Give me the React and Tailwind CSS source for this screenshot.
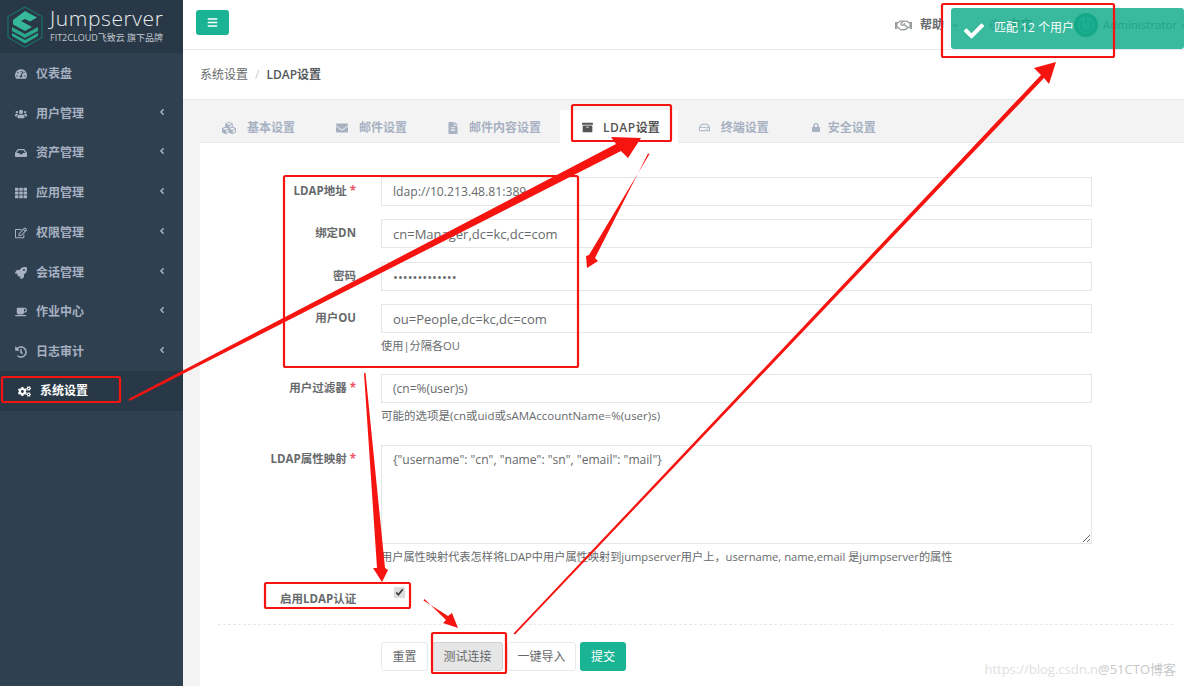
import React from 'react';
import {
  FaTachometerAlt, FaUsers, FaInbox, FaTh, FaRegEdit, FaRocket, FaCoffee, FaHistory, FaCogs,
  FaBars, FaCubes, FaEnvelope, FaFileAlt, FaArchive, FaRegHdd, FaLock, FaRegHandshake, FaCheck,
  FaAngleLeft, FaCaretDown, FaGlobe,
} from 'react-icons/fa';

const FONT = "font-['Open_Sans','Noto_Sans_CJK_SC',sans-serif]";

const MENU = [
  { icon: FaTachometerAlt, label: '仪表盘' },
  { icon: FaUsers, label: '用户管理', more: true },
  { icon: FaInbox, label: '资产管理', more: true },
  { icon: FaTh, label: '应用管理', more: true },
  { icon: FaRegEdit, label: '权限管理', more: true },
  { icon: FaRocket, label: '会话管理', more: true },
  { icon: FaCoffee, label: '作业中心', more: true },
  { icon: FaHistory, label: '日志审计', more: true },
];

const TABS = [
  { icon: FaCubes, label: '基本设置', iconClass: 'w-[14px] h-[14px] mr-[11px]' },
  { icon: FaEnvelope, label: '邮件设置', iconClass: 'w-[12px] h-[12px] mr-[11px]' },
  { icon: FaFileAlt, label: '邮件内容设置', iconClass: 'w-[10px] h-[12px] mr-[11px]' },
  { icon: FaArchive, label: 'LDAP设置', iconClass: 'w-[11px] h-[11px] mr-[10px]', active: true },
  { icon: FaRegHdd, label: '终端设置', iconClass: 'w-[11px] h-[11px] -ml-[2px] mr-[11px]' },
  { icon: FaLock, label: '安全设置', iconClass: 'w-[8px] h-[11px] ml-[2px] mr-[8px]' },
];

function Logo() {
  return (
    <svg width="38" height="42" viewBox="0 0 38 42" className="shrink-0">
      <path d="M19 1 L36 10.5 V31.5 L19 41 L2 31.5 V10.5 Z" fill="none" stroke="#1c6f68" strokeWidth="1.2" />
      <path d="M19 5 L31 11.5 L24 15.5 L19 13 L15 15 L26 21 L19 25 L7 18.5 V14 Z" fill="#35b99a" />
      <path d="M6 21 L19 28 L32 21 V25 L19 32 L6 25 Z" fill="#2ba78a" />
      <path d="M6 27 L19 34 L32 27 V30 L19 37.5 L6 30 Z" fill="#2ba78a" />
    </svg>
  );
}

function Sidebar() {
  return (
    <aside className="w-[183px] shrink-0 bg-[#2f4050] text-[#a7b1c2]">
      <div className="h-[53px] bg-[#293846] flex items-center pl-[6px] gap-[6px]">
        <Logo />
        <div className="flex flex-col -mt-[3px]">
          <span className="text-[21px] leading-[25px] tracking-[0.6px] text-[#e8ecef] font-light">Jumpserver</span>
          <span className="text-[9px] leading-[14px] text-[#c3cad2] whitespace-nowrap">FIT2CLOUD飞致云 旗下品牌</span>
        </div>
      </div>
      <nav className="pt-[1px]">
        {MENU.map((m) => (
          <div key={m.label} className="h-[39.75px] flex items-center pl-[15px] pr-[16px] text-[12px] font-semibold">
            <m.icon className="w-[12px] h-[12px] mr-[9px]" />
            <span>{m.label}</span>
            {m.more && <FaAngleLeft className="ml-auto w-[10px] h-[10px] -mt-[4px]" />}
          </div>
        ))}
        <div className="h-[40px] -mt-[1px] flex items-center pl-[18px] bg-[#293846] text-white text-[12px] font-semibold">
          <FaCogs className="w-[13px] h-[13px] mr-[9px]" />
          <span>系统设置</span>
        </div>
      </nav>
    </aside>
  );
}

function TopBar() {
  return (
    <header className="h-[50px] bg-white border-b border-[#e7eaec] flex items-start pl-[13px] shrink-0">
      <button className="mt-[10px] w-[33px] h-[25px] shrink-0 rounded-[3px] bg-[#1ab394] text-white flex items-center justify-center">
        <FaBars className="w-[11px] h-[11px]" />
      </button>
      <div className="ml-[666px] mt-[13px] h-[24px] shrink-0 flex items-center text-[12px] text-[#676a6c] whitespace-nowrap">
        <FaRegHandshake className="w-[17px] h-[17px] shrink-0 text-[#999c9e] mr-[8px]" />
        <span className="font-semibold">帮助</span>
        <FaCaretDown className="w-[9px] h-[9px] shrink-0 ml-[7px] mr-[29px] text-[#999c9e]" />
        <FaGlobe className="w-[12px] h-[12px] shrink-0 text-[#999c9e] mr-[7px]" />
        <span className="font-semibold mr-[42px]">中文</span>
        <svg width="24" height="24" viewBox="0 0 24 24" className="mr-[5px] shrink-0">
          <circle cx="12" cy="12" r="12" fill="#0b8f76" />
          <circle cx="12" cy="12" r="8.5" fill="#2fc0a2" />
          <path d="M8 8.5 A5.5 5.5 0 1 0 16 8.5" fill="none" stroke="#0b8f76" strokeWidth="2" />
          <path d="M12 5.5 V12" stroke="#0b8f76" strokeWidth="2" />
        </svg>
        <span className="text-[11.5px]">Administrator</span>
        <FaCaretDown className="w-[9px] h-[9px] ml-[2px] shrink-0 text-[#999c9e]" />
      </div>
    </header>
  );
}

function Breadcrumb() {
  return (
    <div className="h-[50px] pt-[1px] bg-white border-b border-[#e7eaec] flex items-center pl-[17px] text-[12px] text-[#676a6c] shrink-0">
      <span>系统设置</span>
      <span className="mx-[7px] text-[#cccccc]">/</span>
      <span className="font-semibold text-[#55585a]">LDAP设置</span>
    </div>
  );
}

function Tabs() {
  return (
    <div className="h-[43px] ml-[17px] flex items-end gap-[1px] border-b border-[#e7eaec] shrink-0">
      {TABS.map((t) => (
        <div
          key={t.label}
          className={`h-[33px] pt-[2px] pl-[22px] pr-[18px] flex items-center text-[12px] font-semibold whitespace-nowrap -mb-px ${
            t.active ? 'bg-white text-[#555555]' : 'text-[#a7b1c2]'
          }`}
        >
          <t.icon className={t.iconClass} />
          {t.active ? (
            <>
              <span className="tracking-[0.5px]">LDAP</span>设置
            </>
          ) : (
            t.label
          )}
        </div>
      ))}
    </div>
  );
}

function Row({ label, required, help, helpClass = 'text-[11.5px]', children, className = '' }) {
  return (
    <div className={`flex ${className}`}>
      <label className="w-[156px] pt-[5px] text-right text-[11.5px] font-bold text-[#676a6c] leading-[18px] shrink-0">
        {label}
        {required && <span className="text-[#ed5565]"> *</span>}
      </label>
      <div className="ml-[25px] w-[711px]">
        {children}
        {help && <p className={`${helpClass} leading-[18px] mt-[4px] text-[#676a6c] whitespace-nowrap`}>{help}</p>}
      </div>
    </div>
  );
}

function Field({ value, type = 'text', size = 'text-[13px]' }) {
  return (
    <input
      readOnly
      type={type}
      value={value}
      className={`block w-full h-[29px] px-[11px] border border-[#e5e6e7] bg-white ${size} text-[#676a6c] outline-none`}
    />
  );
}

function LdapForm() {
  return (
    <div className="ml-[17px] bg-white flex-1 pt-[34px] min-h-0">
      <Row label="LDAP地址" required>
        <Field value="ldap://10.213.48.81:389" size="text-[12.2px]" />
      </Row>
      <Row label="绑定DN" className="mt-[13px]">
        <Field value="cn=Manager,dc=kc,dc=com" />
      </Row>
      <Row label="密码" className="mt-[14px]">
        <Field value="*************" type="password" />
      </Row>
      <Row label="用户OU" className="mt-[13px]" help="使用|分隔各OU" helpClass="text-[11.2px]">
        <Field value="ou=People,dc=kc,dc=com" />
      </Row>
      <Row
        label="用户过滤器"
        required
        className="mt-[19px]"
        help="可能的选项是(cn或uid或sAMAccountName=%(user)s)"
      >
        <Field value="(cn=%(user)s)" size="text-[12px]" />
      </Row>
      <Row
        label="LDAP属性映射"
        required
        className="mt-[20px]"
        help="用户属性映射代表怎样将LDAP中用户属性映射到jumpserver用户上，username, name,email 是jumpserver的属性"
        helpClass="text-[11.2px]"
      >
        <textarea
          readOnly
          value={'{"username": "cn", "name": "sn", "email": "mail"}'}
          className="block w-full h-[99px] px-[11px] py-[5px] border border-[#e5e6e7] bg-white text-[12.1px] text-[#676a6c] outline-none"
        />
      </Row>
      <div className="flex items-start mt-[21px] h-[20px]">
        <span className="ml-[80px] mt-[3px] w-[126px] text-[11.5px] font-bold text-[#676a6c] leading-[18px]">启用LDAP认证</span>
        <input readOnly checked type="checkbox" className="w-[11px] h-[11px] mt-[0px] ml-[-12px] accent-[#dddddd]" />
      </div>
      <div className="ml-[18px] mr-[11px] mt-[17px] border-t border-dashed border-[#e7eaec]" />
      <div className="flex mt-[17px] ml-[181px] gap-[4px] text-[12px]">
        <button className="w-[47px] h-[29px] border border-[#e7eaec] rounded-[3px] bg-white text-[#676a6c]">重置</button>
        <button className="w-[71px] h-[29px] border border-[#d2d2d2] rounded-[3px] bg-[#e6e6e6] text-[#676a6c]">测试连接</button>
        <button className="w-[69px] h-[29px] border border-[#e7eaec] rounded-[3px] bg-white text-[#676a6c]">一键导入</button>
        <button className="w-[46px] h-[29px] rounded-[3px] bg-[#1ab394] text-white">提交</button>
      </div>
    </div>
  );
}

function Toast() {
  return (
    <div className="absolute left-[951px] top-[8px] w-[233px] h-[41px] bg-[#16ad8c]/85 rounded-[3px] flex items-center pl-[13px] text-white text-[12px] z-10">
      <FaCheck className="w-[20px] h-[20px] mr-[10px] mt-[4px]" />
      <span className="-mt-[1px]">匹配 12 个用户</span>
    </div>
  );
}

// the red marks somebody drew over the screenshot
function Annotations() {
  const boxes = [
    [2, 377, 118, 25],
    [942, 4, 172, 53],
    [572, 105, 99, 36],
    [284, 176, 294, 191],
    [265, 583, 145, 25],
    [432, 633, 74, 40],
  ];
  return (
    <svg className="absolute inset-0 z-20 pointer-events-none" width="1184" height="686" viewBox="0 0 1184 686">
      {boxes.map(([x, y, w, h]) => (
        <rect key={x} x={x} y={y} width={w} height={h} rx="1.5" fill="none" stroke="#f5140f" strokeWidth="2.2" />
      ))}
      <g fill="#f5140f">
        <path d="M128.5 399 L616 144 L611 137 L641 138 L628 158 L621 151 L129.5 401 Z" />
        <path d="M648 153.5 L595 258 L598 261 L587 268 L586 256 L589 255 L649.5 154 Z" />
        <path d="M364 373 L365.5 373 L385 568 L388 570 L382 582 L373 568 L377 568 Z" />
        <path d="M423.5 600.5 L448 616 L452 613 L458 628 L443 623 L446 620 L424.5 599 Z" />
        <path d="M513.5 633.5 L1041 75 L1034 68 L1056 62 L1049 84 L1044 78 L515 634.5 Z" />
      </g>
    </svg>
  );
}

export default function App() {
  return (
    <div className={`relative w-[1184px] h-[686px] overflow-hidden flex bg-[#f3f3f4] ${FONT}`}>
      <Sidebar />
      <main className="flex-1 flex flex-col min-w-0">
        <TopBar />
        <Breadcrumb />
        <Tabs />
        <LdapForm />
      </main>
      <Toast />
      <Annotations />
      <div className="absolute right-[8px] bottom-[7px] z-10 text-[13px] text-[#e0e0e0] whitespace-nowrap">
        https://blog.csdn.n<span className="text-[#c8c8c8]">@51CTO博客</span>
      </div>
    </div>
  );
}
